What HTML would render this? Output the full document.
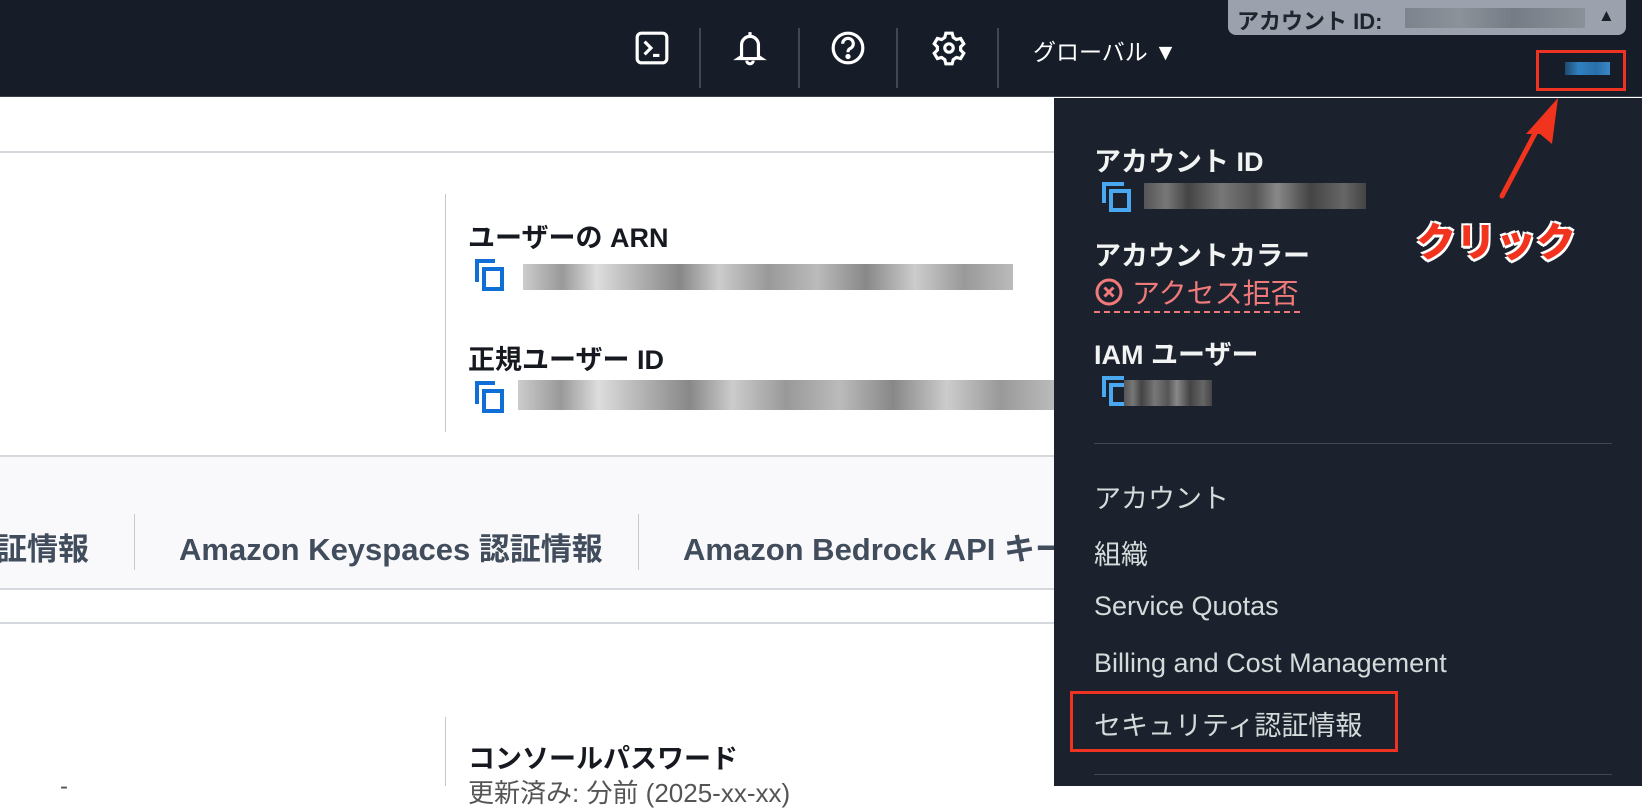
<!DOCTYPE html>
<html><head><meta charset="utf-8">
<style>
*{margin:0;padding:0;box-sizing:border-box}
body{width:1642px;height:786px;overflow:hidden;position:relative;background:#fff;font-family:"Liberation Sans","Noto Sans CJK JP",sans-serif}
.a{position:absolute;white-space:nowrap}
.hdr{left:0;top:0;width:1642px;height:97px;background:#161d28;border-bottom:1px solid #3a404b}
.vd{width:2px;height:60px;background:#414750;top:28px}
.panel{left:1054px;top:98px;width:588px;height:688px;background:#1b222d}
.pt{color:#f2f3f3;font-weight:bold;font-size:27px}
.pi{color:#d5dbdb;font-size:27px}
.bl{color:#16191f;font-weight:bold;font-size:27px}
.tab{color:#414d5c;font-weight:bold;font-size:31px}
.blur{height:26px;background:linear-gradient(90deg,#ccc 0,#999 8%,#ddd 15%,#aaa 25%,#888 32%,#ccc 40%,#999 50%,#bbb 60%,#888 70%,#ccc 80%,#999 90%,#bbb 100%)}
.blurd{height:26px;background:linear-gradient(90deg,#555 0,#777 10%,#444 20%,#777 35%,#555 50%,#888 60%,#444 75%,#666 90%,#444 100%)}
</style></head><body>
<!-- left content -->
<div class="a" style="left:0;top:151px;width:1054px;height:2px;background:#d5d8dc"></div>
<div class="a" style="left:445px;top:194px;width:1px;height:238px;background:#c6c9cd"></div>
<div class="a bl" style="left:468px;top:216px">ユーザーの ARN</div>
<svg class="a" style="left:474px;top:258px" width="32" height="34" viewBox="0 0 32 34" fill="none" stroke="#0f6fd6" stroke-width="4"><path d="M3 24V3h18"/><rect x="10" y="11" width="18" height="20"/></svg>
<div class="a blur" style="left:523px;top:264px;width:490px"></div>
<div class="a bl" style="left:468px;top:338px">正規ユーザー ID</div>
<svg class="a" style="left:474px;top:380px" width="32" height="34" viewBox="0 0 32 34" fill="none" stroke="#0f6fd6" stroke-width="4"><path d="M3 24V3h18"/><rect x="10" y="11" width="18" height="20"/></svg>
<div class="a blur" style="left:518px;top:380px;width:536px;height:30px"></div>
<div class="a" style="left:0;top:455px;width:1054px;height:135px;background:#f9f9fb;border-top:2px solid #d5d8dc;border-bottom:2px solid #d5d8dc"></div>
<div class="a tab" style="left:-4px;top:524px">証情報</div>
<div class="a" style="left:134px;top:514px;width:1px;height:56px;background:#c6c9cd"></div>
<div class="a tab" style="left:179px;top:524px">Amazon Keyspaces 認証情報</div>
<div class="a" style="left:638px;top:514px;width:1px;height:56px;background:#c6c9cd"></div>
<div class="a tab" style="left:683px;top:524px">Amazon Bedrock API キー</div>
<div class="a" style="left:0;top:622px;width:1054px;height:2px;background:#d5d8dc"></div>
<div class="a" style="left:445px;top:717px;width:1px;height:69px;background:#c6c9cd"></div>
<div class="a bl" style="left:468px;top:737px">コンソールパスワード</div>
<div class="a" style="left:468px;top:773px;color:#555;font-size:26px">更新済み: 分前 (2025-xx-xx)</div>
<div class="a" style="left:60px;top:773px;color:#555;font-size:24px">-</div>

<div class="a hdr"></div>
<svg class="a" style="left:634px;top:30px" width="36" height="36" viewBox="0 0 34 34" fill="none" stroke="#fff" stroke-width="3"><rect x="3" y="3" width="28" height="28" rx="4"/><path d="M10 11l6 6-6 6M18 24h6"/></svg>
<div class="a vd" style="left:699px"></div>
<svg class="a" style="left:732px;top:29px" width="36" height="38" viewBox="0 0 34 36" fill="none" stroke="#fff" stroke-width="3"><path d="M9 26V15a8 8 0 0 1 16 0v11l3 2H6z M17 3v4 M14 30a3 3 0 0 0 6 0"/></svg>
<div class="a vd" style="left:798px"></div>
<svg class="a" style="left:830px;top:30px" width="36" height="36" viewBox="0 0 34 34" fill="none" stroke="#fff" stroke-width="3"><circle cx="17" cy="17" r="14"/><path d="M12 13a5 5 0 1 1 7 4.5c-1.5.8-2 1.5-2 3.5"/><circle cx="17" cy="25" r="1" fill="#fff"/></svg>
<div class="a vd" style="left:896px"></div>
<svg class="a" style="left:930px;top:29px" width="38" height="38" viewBox="0 0 36 36" fill="none" stroke="#fff" stroke-width="3"><path d="M15 4h6l1 4 3 2 4-1 3 5-3 3v3l3 3-3 5-4-1-3 2-1 4h-6l-1-4-3-2-4 1-3-5 3-3v-3l-3-3 3-5 4 1 3-2z"/><circle cx="18" cy="18" r="4"/></svg>
<div class="a vd" style="left:997px"></div>
<div class="a" style="left:1033px;top:33px;color:#fff;font-size:23px">グローバル ▼</div>
<div class="a" style="left:1228px;top:0;width:398px;height:35px;background:#9ba2ad;border-radius:0 0 8px 8px"></div>
<div class="a" style="left:1237px;top:4px;color:#20252d;font-weight:bold;font-size:22px">アカウント ID:</div>
<div class="a" style="left:1405px;top:8px;width:180px;height:20px;background:linear-gradient(90deg,#7d838c,#8c929a 30%,#767c85 60%,#8b9199)"></div>
<div class="a" style="left:1598px;top:6px;color:#1a1f27;font-size:17px">▲</div>
<div class="a" style="left:1536px;top:50px;width:90px;height:41px;border:3px solid #ee3322"></div>
<div class="a" style="left:1565px;top:62px;width:45px;height:13px;background:linear-gradient(90deg,#1e4a70,#2f80c0 30%,#2a6fa8 70%,#3889c8)"></div>
<div class="a panel"></div>
<div class="a pt" style="left:1094px;top:140px">アカウント ID</div>
<svg class="a" style="left:1101px;top:181px" width="32" height="32" viewBox="0 0 32 32" fill="none" stroke="#4aa8f0" stroke-width="4"><path d="M3 22V3h20"/><rect x="10" y="10" width="18" height="19"/></svg>
<div class="a blurd" style="left:1144px;top:183px;width:222px"></div>
<div class="a pt" style="left:1094px;top:234px">アカウントカラー</div>
<svg class="a" style="left:1094px;top:277px" width="30" height="30" viewBox="0 0 30 30"><circle cx="15" cy="15" r="12" fill="none" stroke="#f07a7a" stroke-width="3"/><path d="M10.5 10.5l9 9M19.5 10.5l-9 9" stroke="#f07a7a" stroke-width="3"/></svg>
<div class="a" style="left:1132px;top:272px;color:#f07a7a;font-size:28px">アクセス拒否</div>
<div class="a" style="left:1094px;top:311px;width:206px;border-top:2px dashed #f07a7a"></div>
<div class="a pt" style="left:1094px;top:333px">IAM ユーザー</div>
<svg class="a" style="left:1101px;top:375px" width="32" height="32" viewBox="0 0 32 32" fill="none" stroke="#4aa8f0" stroke-width="4"><path d="M3 22V3h20"/><rect x="10" y="10" width="18" height="19"/></svg>
<div class="a blurd" style="left:1124px;top:380px;width:88px"></div>
<div class="a" style="left:1094px;top:443px;width:518px;height:1px;background:#414750"></div>
<div class="a pi" style="left:1094px;top:477px">アカウント</div>
<div class="a pi" style="left:1094px;top:533px">組織</div>
<div class="a pi" style="left:1094px;top:591px">Service Quotas</div>
<div class="a pi" style="left:1094px;top:648px">Billing and Cost Management</div>
<div class="a pi" style="left:1094px;top:704px">セキュリティ認証情報</div>
<div class="a" style="left:1070px;top:691px;width:328px;height:61px;border:3px solid #ee3322"></div>
<div class="a" style="left:1094px;top:774px;width:518px;height:1px;background:#414750"></div>
<svg class="a" style="left:1490px;top:92px" width="80" height="110" viewBox="0 0 80 110"><path d="M12 104L50 32" stroke="#f2331d" stroke-width="5" stroke-linecap="round"/><path d="M68 6L62 52 50 42 36 42z" fill="#f2331d"/></svg>
<div class="a" style="left:1416px;top:210px;color:#f2331d;font-weight:900;font-size:40px;text-shadow:2px 2px 0 #fff,-2px -2px 0 #fff,2px -2px 0 #fff,-2px 2px 0 #fff,0 3px 0 #fff">クリック</div>
</body></html>
